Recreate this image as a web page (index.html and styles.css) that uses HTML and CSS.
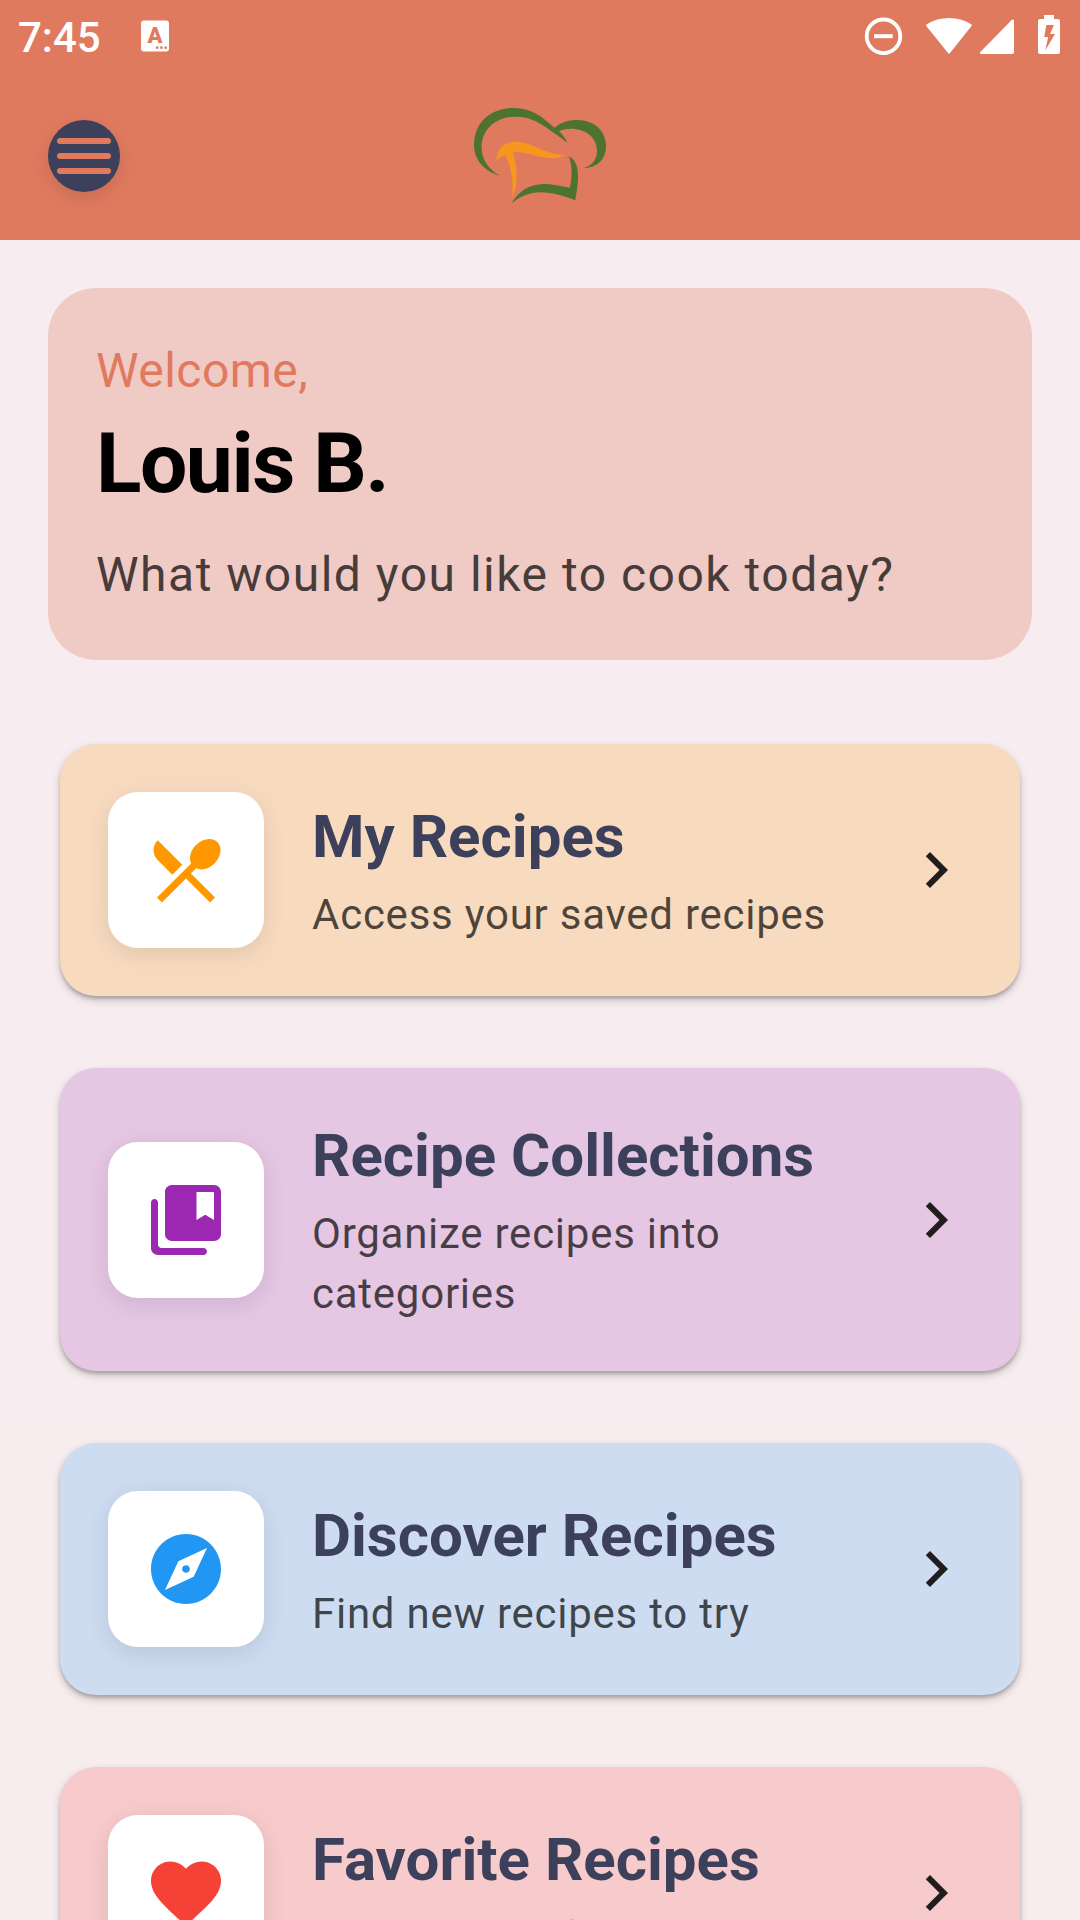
FILE: index.html
```html
<!DOCTYPE html>
<html lang="en">
<head>
<meta charset="utf-8">
<title>Recipes</title>
<link rel="stylesheet" href="styles.css">
</head>
<body>
<div class="screen">
  <header class="header">
    <div class="status">
      <span class="clock">7:45</span>
      <svg class="notice" width="30" height="32" viewBox="0 0 30 32">
        <rect x="1" y=".5" width="28" height="31" rx="3" fill="#fff"/>
        <text x="15" y="23" text-anchor="middle" class="notice-letter">A</text>
        <g fill="#e07a5f"><circle cx="17.2" cy="27.7" r="1.4"/><circle cx="21.4" cy="27.7" r="1.4"/><circle cx="25.6" cy="27.7" r="1.4"/></g>
      </svg>
      <div class="status-icons">
        <svg width="40" height="40" viewBox="0 0 40 40"><circle cx="19.5" cy="20.3" r="16.8" fill="none" stroke="#fff" stroke-width="3.8"/><path d="M10 18.2h18.7v4H10z" fill="#fff"/></svg>
        <svg class="wifi" width="46" height="40" viewBox="0 0 46 40"><path d="M.3 9C-.2 8.300 0 7.800.7 7.300 14-1.100 32-1.100 45.200 7.300c.7.500.9 1 .3 1.700L24 36c-.7.900-1.300.9-2 0z" fill="#fff"/></svg>
        <svg class="signal" width="34" height="40" viewBox="0 0 34 40"><path d="M31.500 4.300Q34 2.500 34 5v31q0 2-2 2H2q-3.500 0-1.200-2.600z" fill="#fff"/></svg>
        <svg class="battery" width="22" height="40" viewBox="0 0 22 40"><path fill-rule="evenodd" d="M6 0h10v4h4q2 0 2 2v31q0 2-2 2H2q-2 0-2-2V6q0-2 2-2h4zM8.300 10L6.200 22h4L7.200 35.500 17 19h-5l4-9z" fill="#fff"/></svg>
      </div>
    </div>
    <div class="toolbar">
      <div class="menu"><i></i><i></i><i></i></div>
      <svg class="logo" width="160" height="120" viewBox="0 3 480 360">
        <g fill="#4d7331">
          <path d="M119 242C72 228 42 195 42 150C43 83 91 39 161 39C215 39 246 65 283 98C303 83 324 75 351 75C403 75 438 108 438 152C438 194 411 218 372 219C397 210 411 194 411 167C411 127 377 101 333 101C318 101 306 104 297 109C308 119 317 131 322 144C305 128 283 115 264 101C231 78 205 65 168 65C107 65 65 103 65 157C65 194 85 222 119 242Z"/>
          <path d="M326 184C348 193 355 219 354 248C353 274 349 296 346 316C307 301 277 293 243 292C206 292 183 304 154 325C178 287 207 268 251 267C276 267 303 273 330 278C336 246 338 211 326 184Z"/>
        </g>
        <path fill="#f7981d" d="M108 199C112 163 129 142 163 140C200 139 225 157 256 168C278 176 294 180 316 179C293 192 267 191 240 185C212 178 190 170 159 171C169 207 172 244 168 270C165 288 160 299 156 306C161 264 155 220 137 181C125 183 116 188 108 199Z"/>
      </svg>
    </div>
  </header>

  <main class="content">
    <section class="welcome">
      <p class="hello">Welcome,</p>
      <h1 class="name">Louis B.</h1>
      <p class="question">What would you like to cook today?</p>
    </section>

    <nav class="cards">
      <a class="card orange">
        <span class="tile"><svg width="84" height="84" viewBox="0 0 24 24" fill="#ff9800"><path d="M8.100 13.340l2.830-2.830L3.910 3.500c-1.560 1.560-1.560 4.090 0 5.660l4.190 4.180zm6.780-1.810c1.530.71 3.680.21 5.270-1.380 1.910-1.910 2.280-4.650.81-6.120-1.460-1.460-4.200-1.100-6.120.81-1.590 1.590-2.090 3.740-1.380 5.270L3.700 19.870l1.410 1.410L12 14.410l6.880 6.880 1.410-1.410L13.410 13l1.470-1.470z"/></svg></span>
        <span class="text"><b class="title">My Recipes</b><span class="sub">Access your saved recipes</span></span>
        <svg width="72" height="72" viewBox="0 0 24 24" fill="#211d1d"><path d="M10 6L8.590 7.410 13.170 12l-4.580 4.590L10 18l6-6z"/></svg>
      </a>
      <a class="card purple">
        <span class="tile"><svg width="84" height="84" viewBox="0 0 24 24" fill="#9c27b0"><path d="M3 6c-.55 0-1 .45-1 1v13c0 1.100.9 2 2 2h13c.55 0 1-.45 1-1s-.45-1-1-1H5c-.55 0-1-.45-1-1V7c0-.55-.45-1-1-1z"/><path d="M20 2H8c-1.100 0-2 .9-2 2v12c0 1.100.9 2 2 2h12c1.100 0 2-.9 2-2V4c0-1.100-.9-2-2-2zm0 10l-2.500-1.500L15 12V4h5v8z"/></svg></span>
        <span class="text"><b class="title">Recipe Collections</b><span class="sub">Organize recipes into categories</span></span>
        <svg width="72" height="72" viewBox="0 0 24 24" fill="#211d1d"><path d="M10 6L8.590 7.410 13.170 12l-4.580 4.590L10 18l6-6z"/></svg>
      </a>
      <a class="card blue">
        <span class="tile"><svg width="84" height="84" viewBox="0 0 24 24" fill="#2196f3"><path d="M12 10.900c-.61 0-1.100.49-1.100 1.100s.49 1.100 1.100 1.100c.61 0 1.100-.49 1.100-1.100s-.49-1.100-1.100-1.100zM12 2C6.480 2 2 6.480 2 12s4.480 10 10 10 10-4.480 10-10S17.520 2 12 2zm2.190 12.190L6 18l3.810-8.190L18 6l-3.810 8.190z"/></svg></span>
        <span class="text"><b class="title">Discover Recipes</b><span class="sub">Find new recipes to try</span></span>
        <svg width="72" height="72" viewBox="0 0 24 24" fill="#211d1d"><path d="M10 6L8.590 7.410 13.170 12l-4.580 4.590L10 18l6-6z"/></svg>
      </a>
      <a class="card pink">
        <span class="tile"><svg width="84" height="84" viewBox="0 0 24 24" fill="#f44336"><path d="M13.350 20.130c-.76.69-1.930.69-2.690-.01l-.11-.1C5.300 15.270 1.870 12.160 2 8.280c.06-1.700.93-3.330 2.340-4.290 2.640-1.800 5.900-.96 7.660 1.100 1.760-2.060 5.020-2.910 7.660-1.100 1.410.96 2.280 2.590 2.340 4.290.14 3.880-3.300 6.990-8.550 11.760l-.1.09z"/></svg></span>
        <span class="text"><b class="title">Favorite Recipes</b><span class="sub">Access your favorites</span></span>
        <svg width="72" height="72" viewBox="0 0 24 24" fill="#211d1d"><path d="M10 6L8.590 7.410 13.170 12l-4.580 4.590L10 18l6-6z"/></svg>
      </a>
    </nav>
  </main>
</div>
</body>
</html>
```
FILE: styles.css
```css
* { box-sizing: border-box; margin: 0; padding: 0; }

body { font-family: Roboto, sans-serif; }
svg { display: block; flex: none; }

.screen {
  width: 1080px;
  height: 1920px;
  overflow: hidden;
  background: linear-gradient(#f7ecf1, #f7ecee);
}

.header { height: 240px; background: #e07a5f; }

.status { display: flex; height: 72px; padding: 16px 20px 0 18px; color: #fff; }
.clock { width: 122px; font-size: 42px; font-weight: 500; line-height: 44px; }
.notice { margin-top: 4px; }
.notice-letter { font: 900 22px Roboto, sans-serif; fill: #e07a5f; }
.status-icons { display: flex; margin-left: auto; }
.wifi { margin: 1px 0 0 22px; }
.signal { margin-left: 8px; }
.battery { margin: -1px 0 0 24px; }

.toolbar {
  display: grid;
  grid-template-columns: 1fr auto 1fr;
  align-items: center;
  height: 168px;
  padding: 0 48px;
}
.menu {
  display: flex;
  flex-direction: column;
  justify-content: center;
  align-items: center;
  gap: 9px;
  width: 72px;
  height: 72px;
  border-radius: 50%;
  background: #3d405b;
  box-shadow: 0 6px 18px rgba(0, 0, 0, .12);
}
.menu i { width: 54px; height: 6px; border-radius: 3px; background: #e07a5f; }

.content { padding: 48px; }

.welcome {
  height: 372px;
  padding: 49px 48px;
  border-radius: 48px;
  background: #f0cac5;
}
.hello { font-size: 48px; line-height: 68px; letter-spacing: .45px; color: #e07a5f; }
.name { margin-top: 8px; font-size: 84px; line-height: 102px; letter-spacing: -1.500px; color: #000; }
.question { margin-top: 24px; font-size: 48px; line-height: 72px; letter-spacing: 1.500px; color: #483c3b; }

.cards { display: flex; flex-direction: column; gap: 72px; padding: 84px 12px 0; }
.card {
  display: flex;
  align-items: center;
  padding: 48px;
  border-radius: 36px;
  box-shadow: 0 3px 3px rgba(0, 0, 0, .16), 0 4px 9px rgba(0, 0, 0, .2);
}
.orange { background: #f8dbbf; }
.purple { background: #e5c6e3; }
.blue { background: #cddcf1; }
.pink { background: #f7cacb; }

.tile {
  flex: none;
  padding: 36px;
  border-radius: 30px;
  background: #fff;
  box-shadow: 0 6px 24px rgba(0, 0, 0, .1);
}
.text { flex: 1; margin: 1px 48px -1px; }
.title { display: block; margin-bottom: 9px; font-size: 60px; line-height: 78px; color: #3d405b; }
.sub { display: block; font-size: 42px; line-height: 60px; letter-spacing: .75px; color: rgba(0, 0, 0, .7); }
```
